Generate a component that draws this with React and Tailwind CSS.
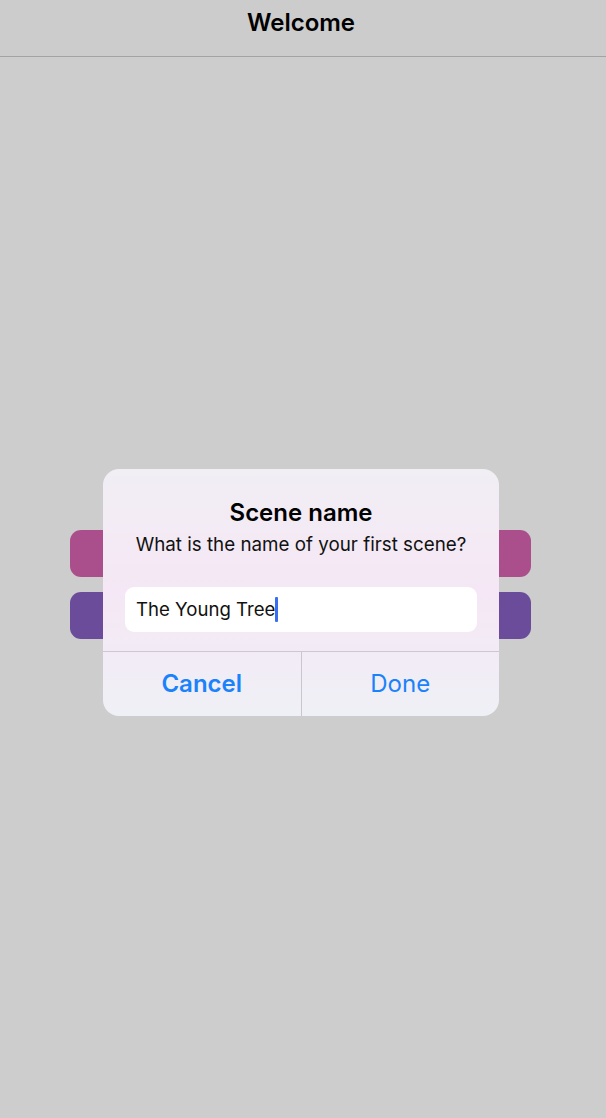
import React from "react";

const font = { fontFamily: "Inter, 'Noto Sans', sans-serif" };

const Header = () => (
  <div className="h-[57px] flex items-center justify-center border-b border-[#a3a3a3] bg-[#cccccc]">
    <h1 className="text-[24px] font-semibold text-black -mt-[10px] mr-[4px]">Welcome</h1>
  </div>
);

const SceneDialog = () => (
  <div className="absolute top-[412px] left-[103px] w-[396px] rounded-[16px] overflow-hidden bg-gradient-to-b from-[#f1eef4] via-[#f5e7f5] to-[#eff0f6]">
    <div className="pt-[30px] px-[22px] flex flex-col items-center">
      <h2 className="text-[24px] leading-[28px] font-semibold text-black">Scene name</h2>
      <p className="mt-[6px] text-[18.8px] leading-[24px] text-[#111]">What is the name of your first scene?</p>
      <div className="mt-[30px] mb-[19px] w-full h-[45px] bg-white rounded-[9px] flex items-center px-[11px]">
        <span className="text-[18.6px] text-[#111]">The Young Tree</span>
        <span className="w-[3px] h-[25px] bg-[#3b6df0] rounded-[1px]"></span>
      </div>
    </div>
    <div className="flex h-[65px] border-t border-[#cdc7d4]">
      <button className="flex-1 text-[24px] font-semibold text-[#1a82fb] border-r border-[#c9c6cf]">Cancel</button>
      <button className="flex-1 text-[24px] text-[#1a82fb]">Done</button>
    </div>
  </div>
);

export default function App() {
  return (
    <div className="min-h-[1118px] bg-[#cdcdcd]" style={font}>
      <Header />
      <div className="relative">
        <div className="pt-[473px] ml-[70px] w-[461px] flex flex-col gap-[15px]">
          <div className="h-[47px] rounded-[11px] bg-[#ab4f8c]"></div>
          <div className="h-[47px] rounded-[11px] bg-[#6a4c9b]"></div>
        </div>
        <SceneDialog />
      </div>
    </div>
  );
}
